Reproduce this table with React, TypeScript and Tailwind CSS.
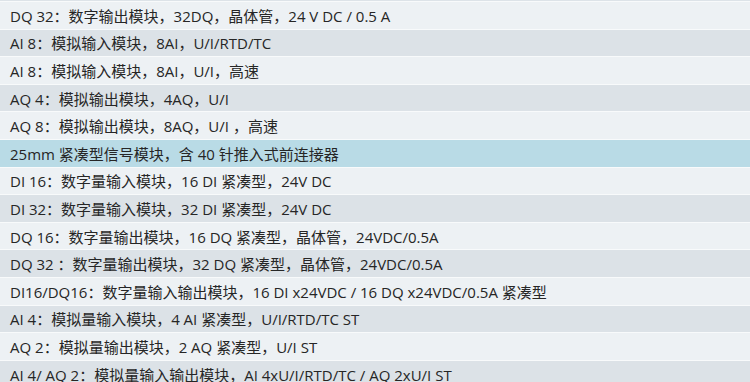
import React from 'react';

const items: string[] = [
  'DQ 32：数字输出模块，32DQ，晶体管，24 V DC / 0.5 A',
  'AI 8：模拟输入模块，8AI，U/I/RTD/TC',
  'AI 8：模拟输入模块，8AI，U/I，高速',
  'AQ 4：模拟输出模块，4AQ，U/I',
  'AQ 8：模拟输出模块，8AQ，U/I ，高速',
  '25mm 紧凑型信号模块，含 40 针推入式前连接器',
  'DI 16：数字量输入模块，16 DI 紧凑型，24V DC',
  'DI 32：数字量输入模块，32 DI 紧凑型，24V DC',
  'DQ 16：数字量输出模块，16 DQ  紧凑型，晶体管，24VDC/0.5A',
  'DQ 32 ：数字量输出模块，32 DQ 紧凑型，晶体管，24VDC/0.5A',
  'DI16/DQ16：数字量输入输出模块，16 DI x24VDC / 16 DQ x24VDC/0.5A 紧凑型',
  'AI 4：模拟量输入模块，4 AI 紧凑型，U/I/RTD/TC ST',
  'AQ 2：模拟量输出模块，2 AQ 紧凑型，U/I ST',
  'AI 4/ AQ 2：模拟量输入输出模块，AI 4xU/I/RTD/TC / AQ 2xU/I ST',
];

const SELECTED = 5;

export default function App() {
  return (
    <div
      className="w-[750px] h-[382px] overflow-hidden bg-[#dfe5ea] text-[15px] text-[#262626]"
      style={{ fontFamily: '"Open Sans", "Noto Sans CJK SC", sans-serif' }}
    >
      <div className="h-[1px] bg-[#dde3e8]" />
      {items.map((label, i) => {
        const bg =
          i === SELECTED ? 'bg-[#b9dbe6]' : i % 2 === 0 ? 'bg-[#edf1f4]' : 'bg-[#dce2e7]';
        return (
          <div
            key={i}
            className={`h-[27.6px] border-t border-[#f8fafb] flex items-center pl-[10px] pt-[2px] whitespace-nowrap leading-none ${bg}`}
          >
            {label}
          </div>
        );
      })}
    </div>
  );
}
